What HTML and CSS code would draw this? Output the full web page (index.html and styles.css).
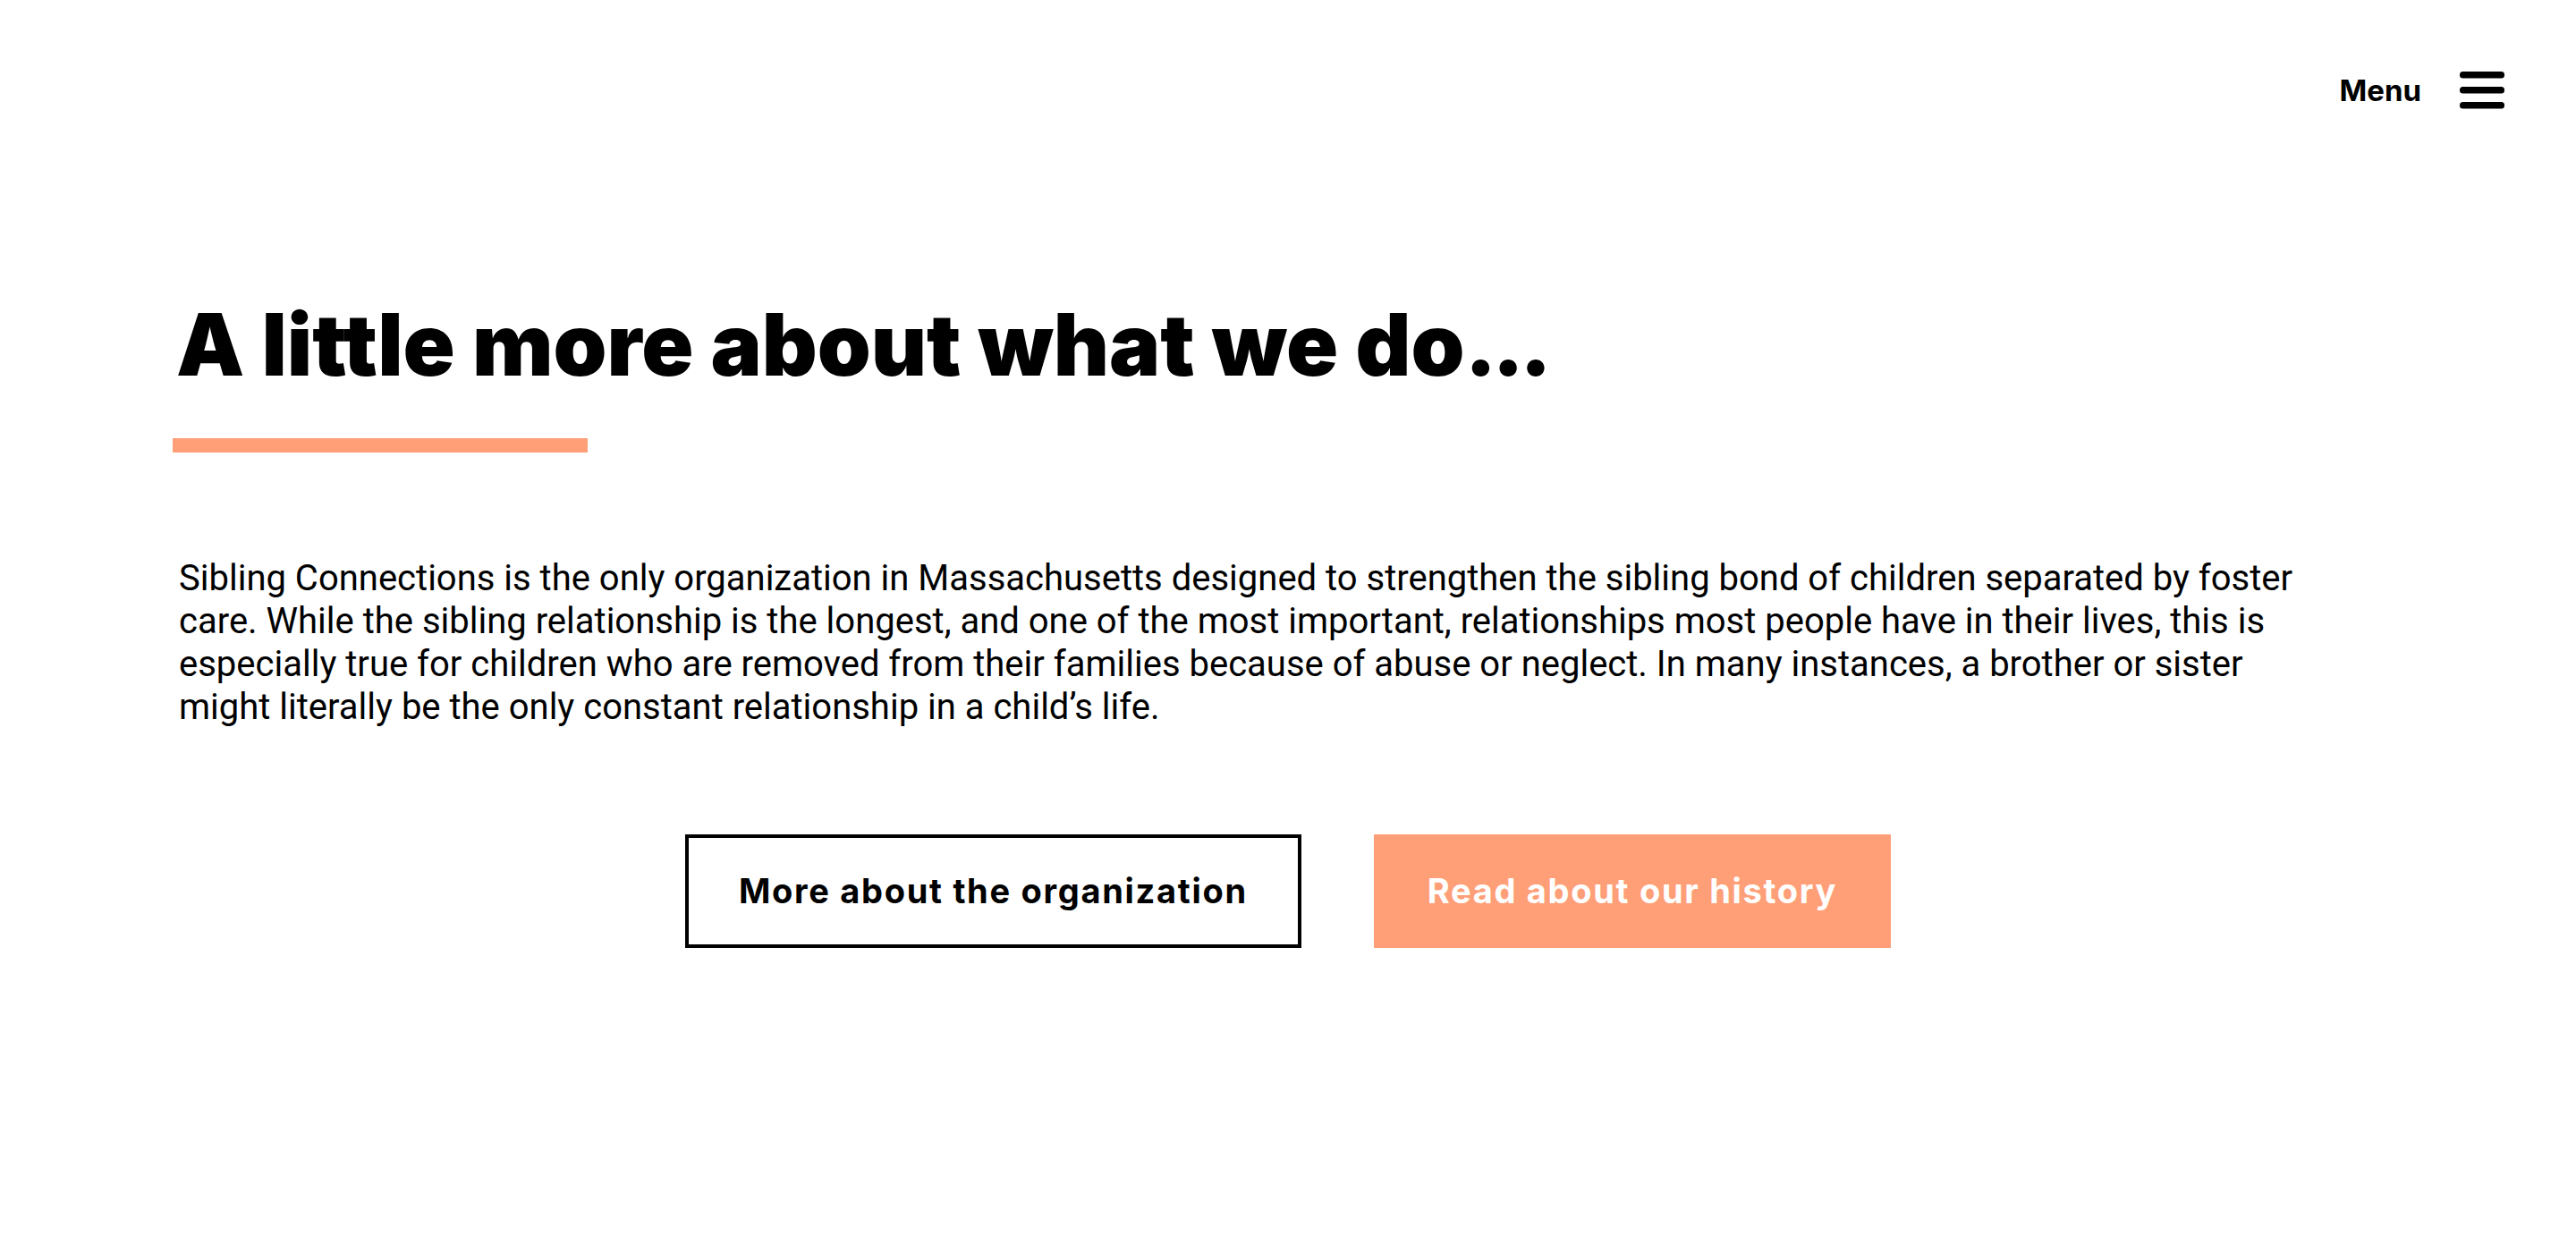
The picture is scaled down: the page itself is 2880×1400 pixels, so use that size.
FILE: index.html
```html
<!DOCTYPE html>
<html lang="en">
<head>
<meta charset="utf-8">
<title>A little more about what we do</title>
<link rel="stylesheet" href="styles.css">
</head>
<body>
<header class="site-header">
  <button class="menu-toggle" type="button">
    <span class="menu-label">Menu</span>
    <svg class="menu-icon" width="50" height="42" viewBox="0 0 50 42" aria-hidden="true">
      <rect x="0" y="0" width="50" height="7.5" rx="3.5" fill="#000"/>
      <rect x="0" y="17" width="50" height="7.5" rx="3.5" fill="#000"/>
      <rect x="0" y="34" width="50" height="7.5" rx="3.5" fill="#000"/>
    </svg>
  </button>
</header>
<main class="about">
  <h1 class="about-title">A little more about what we do<span class="dots">...</span></h1>
  <div class="about-rule"></div>
  <p class="about-text">Sibling Connections is the only organization in Massachusetts designed to strengthen the sibling bond of children separated by foster care. While the sibling relationship is the longest, and one of the most important, relationships most people have in their lives, this is especially true for children who are removed from their families because of abuse or neglect. In many instances, a brother or sister might literally be the only constant relationship in a child’s life.</p>
  <div class="about-actions">
    <a class="btn btn-outline" href="#">More about the organization</a>
    <a class="btn btn-fill" href="#">Read about our history</a>
  </div>
</main>
</body>
</html>
```
FILE: styles.css
```css
* { box-sizing: border-box; }
html, body { margin: 0; padding: 0; background: #fff; }
body {
  font-family: Roboto, "Liberation Sans", sans-serif;
  color: #000;
}
.site-header {
  display: flex;
  justify-content: flex-end;
  padding: 80px 80px 0 0;
}
.menu-toggle {
  display: flex;
  align-items: center;
  gap: 43px;
  background: none;
  border: 0;
  padding: 0;
  cursor: pointer;
}
.menu-label {
  font-family: Inter, "Noto Sans", sans-serif;
  font-weight: 700;
  font-size: 33px;
  letter-spacing: 0;
  color: #000;
}
.menu-icon { display: block; }

.about {
  padding: 0 0 0 191px;
}
.about-title {
  margin: 206px 0 0 6px;
  font-family: Inter, "Noto Sans", sans-serif;
  font-weight: 900;
  font-size: 96px;
  line-height: 115px;
  letter-spacing: 0;
}
.about-title .dots {
  letter-spacing: -5px;
}
.about-rule {
  width: 464px;
  height: 16px;
  background: #ff9f78;
  margin: 47px 0 0 2px;
}
.about-text {
  margin: 117px 0 0 9px;
  width: 2385px;
  font-size: 40px;
  line-height: 48px;
}
.about-actions {
  display: flex;
  justify-content: center;
  gap: 81px;
  margin: 118px 0 0 -191px;
}
.btn {
  display: inline-block;
  font-family: Inter, "Noto Sans", sans-serif;
  font-weight: 700;
  font-size: 38px;
  line-height: 38px;
  letter-spacing: 1.7px;
  text-decoration: none;
  padding: 40px 56px;
  height: 127px;
}
.btn-outline {
  border: 4px solid #000;
  color: #000;
}
.btn-fill {
  border: 4px solid #ff9f78;
  background: #ff9f78;
  color: #fff;
}
```
